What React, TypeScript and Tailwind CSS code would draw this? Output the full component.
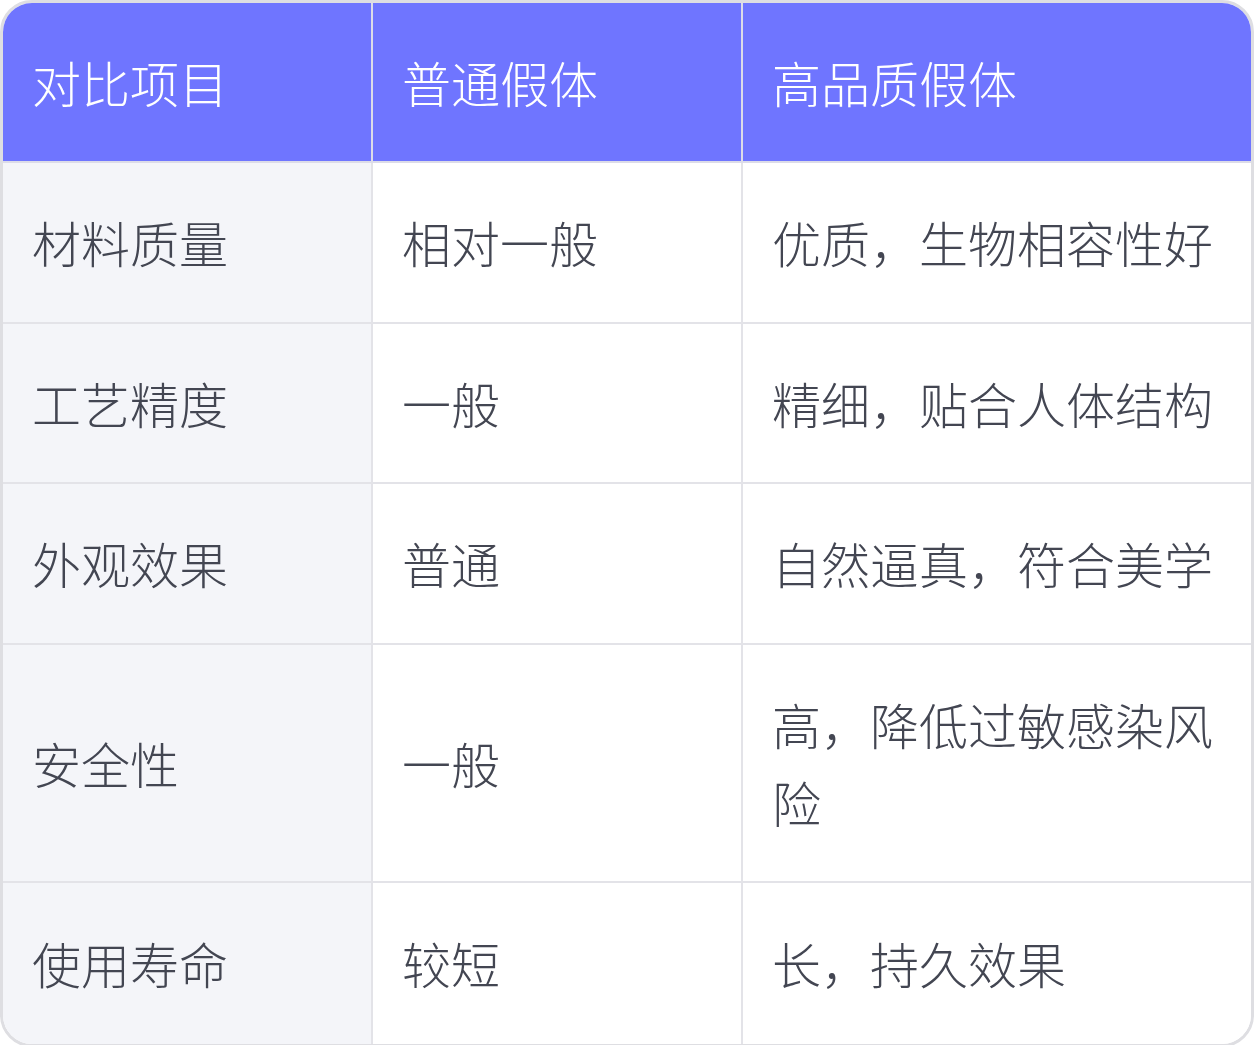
const headers = ["对比项目", "普通假体", "高品质假体"];

const rows = [
  ["材料质量", "相对一般", "优质，生物相容性好"],
  ["工艺精度", "一般", "精细，贴合人体结构"],
  ["外观效果", "普通", "自然逼真，符合美学"],
  ["安全性", "一般", "高，降低过敏感染风险"],
  ["使用寿命", "较短", "长，持久效果"],
];

export default function App() {
  return (
    <div
      className="w-[1254px] bg-white"
      style={{ fontFamily: '"Noto Sans CJK SC", "Noto Sans", sans-serif' }}
    >
      <div className="overflow-hidden rounded-[32px] border-[3px] border-[#dedee2]">
        <div className="grid grid-cols-[370px_370px_1fr] text-[49px] font-light leading-[1.6]">
          {headers.map((h, i) => (
            <div
              key={h}
              className={`flex items-center border-b-2 border-[#dcdce8] bg-[#6f75ff] px-[29px] py-10 text-white ${
                i < 2 ? "border-r-2" : ""
              }`}
            >
              {h}
            </div>
          ))}
          {rows.map((r, ri) =>
            r.map((c, ci) => (
              <div
                key={`${ri}-${ci}`}
                className={`flex items-center px-[29px] text-[#434652] ${
                  ci === 0 ? "bg-[#f4f5f9]" : "bg-white"
                } ${ci < 2 ? "border-r-2 border-[#e3e3e8]" : ""} ${
                  ri < rows.length - 1 ? "border-b-2 border-[#e3e3e8] py-10" : "py-[41px]"
                }`}
              >
                {c}
              </div>
            ))
          )}
        </div>
      </div>
    </div>
  );
}
